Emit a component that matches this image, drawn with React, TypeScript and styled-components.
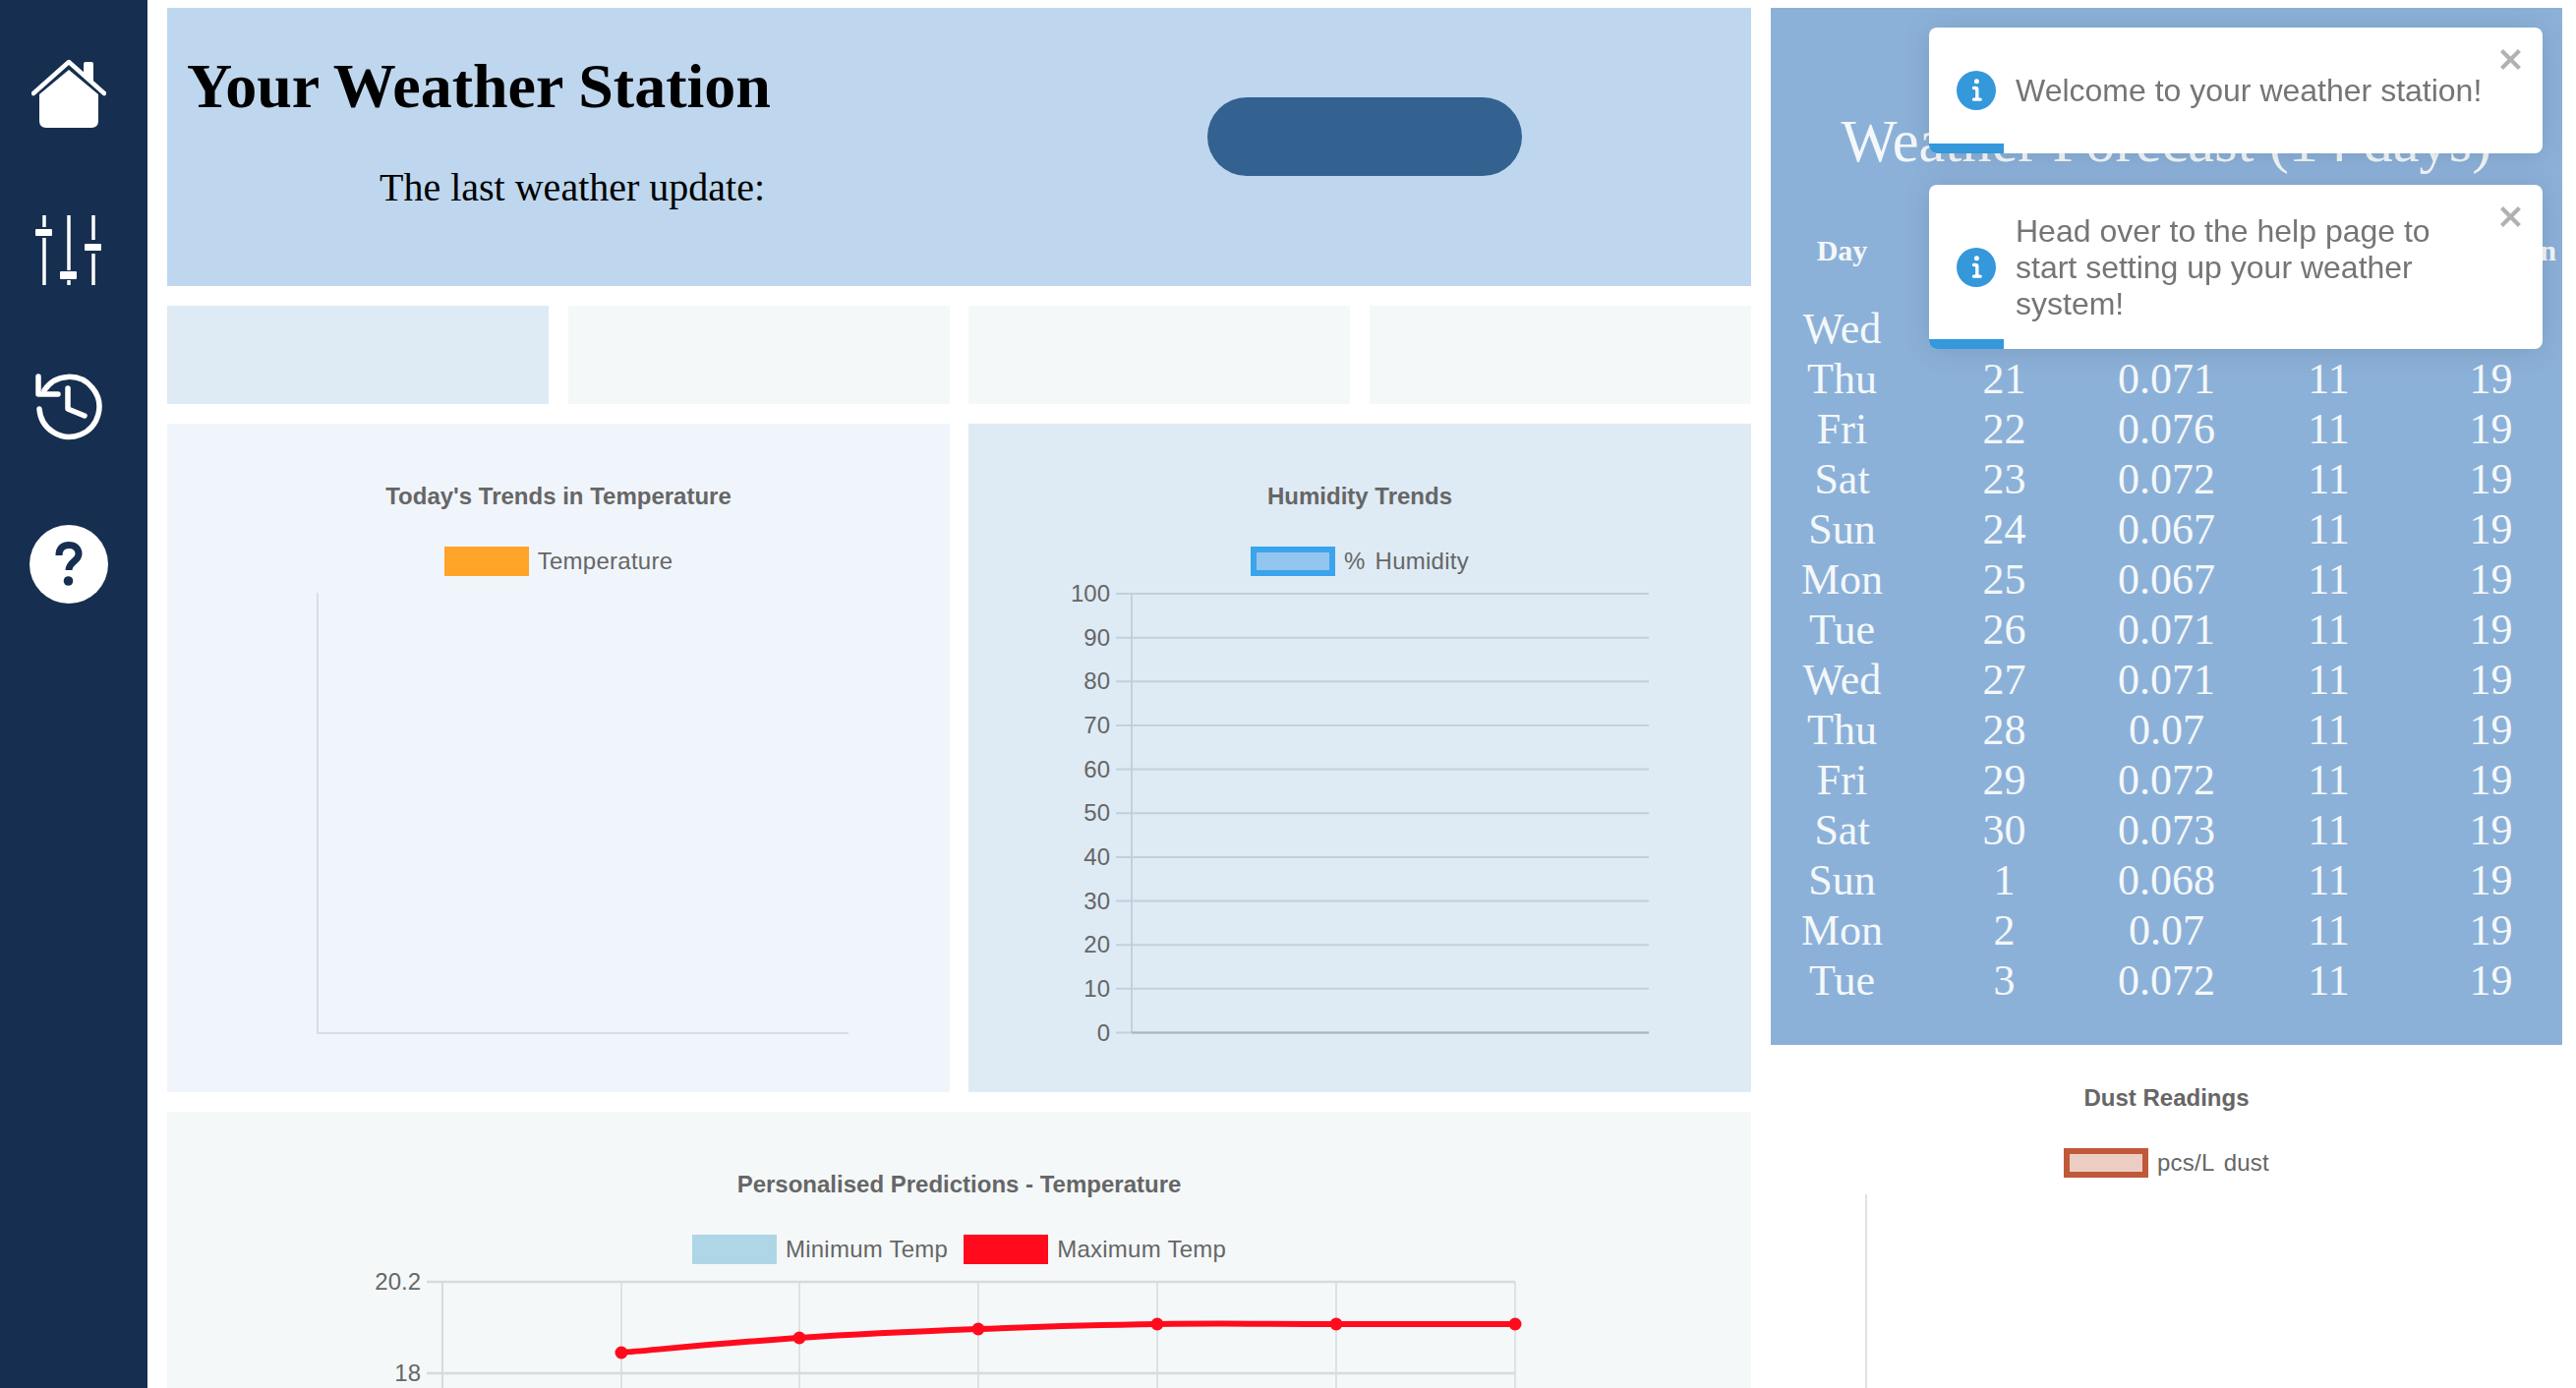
import React from 'react';
import styled, { createGlobalStyle } from 'styled-components';

const GlobalStyle = createGlobalStyle`
  html, body {
    margin: 0;
    height: 100%;
    overflow: hidden;
    background: #fff;
  }
`;

const Page = styled.div`
  display: flex;
  height: 1412px;
  overflow: hidden;
`;

const Sidebar = styled.nav`
  width: 150px;
  flex-shrink: 0;
  background: #162f50;
  display: flex;
  flex-direction: column;
  align-items: center;
  padding: 60px 10px 0 0;
  box-sizing: border-box;
`;

const NavIcon = styled.svg<{ $w: number; $h: number; $gap: number }>`
  width: ${(p) => p.$w}px;
  height: ${(p) => p.$h}px;
  margin-bottom: ${(p) => p.$gap}px;
  display: block;
  flex-shrink: 0;
`;

const Content = styled.div`
  flex: 1;
  display: grid;
  grid-template-columns: 1611px 805px;
  column-gap: 20px;
  padding: 8px 14px 0 20px;
  align-items: start;
`;

const LeftColumn = styled.main`
  display: flex;
  flex-direction: column;
  gap: 20px;
`;

const RightColumn = styled.aside`
  display: flex;
  flex-direction: column;
`;

const Header = styled.header`
  height: 283px;
  background: #bed7ee;
  display: flex;
  justify-content: space-between;
  align-items: flex-start;
  padding: 0 233px 0 20px;
  box-sizing: border-box;
  font-family: 'Liberation Serif', serif;
  color: #000;
`;

const Title = styled.h1`
  margin: 43px 0 0;
  font-size: 64px;
  line-height: 74px;
  font-weight: 700;
`;

const Subtitle = styled.p`
  margin: 43px 0 0 196px;
  font-size: 40px;
  line-height: 46px;
`;

const UpdateButton = styled.button`
  width: 320px;
  height: 80px;
  margin-top: 91px;
  border: none;
  border-radius: 40px;
  background: #336291;
`;

const StatRow = styled.section`
  display: grid;
  grid-template-columns: repeat(4, 388px);
  justify-content: space-between;
`;

const StatCard = styled.div<{ $bg: string }>`
  height: 100px;
  background: ${(p) => p.$bg};
`;

const ChartRow = styled.section`
  display: grid;
  grid-template-columns: 796px 796px;
  justify-content: space-between;
`;

const ChartCard = styled.div<{ $bg: string; $height: number; $top: number }>`
  height: ${(p) => p.$height}px;
  background: ${(p) => p.$bg};
  padding-top: ${(p) => p.$top}px;
  box-sizing: border-box;
  display: flex;
  flex-direction: column;
  align-items: center;
  font-family: 'Liberation Sans', Arial, sans-serif;
  color: #666;
  overflow: hidden;
`;

const ChartTitle = styled.div`
  font-size: 24px;
  font-weight: 700;
  line-height: 28px;
`;

const Legend = styled.div`
  display: flex;
  gap: 16px;
  margin-top: 37px;
  height: 30px;
`;

const LegendItem = styled.div<{ $wordGap?: number }>`
  display: flex;
  align-items: center;
  gap: 9px;
  font-size: 24px;
  line-height: 30px;
  letter-spacing: 0.25px;
  word-spacing: ${(p) => p.$wordGap ?? 0}px;
`;

const LegendBox = styled.span<{ $fill: string; $border: string }>`
  width: 86px;
  height: 30px;
  box-sizing: border-box;
  background: ${(p) => p.$fill};
  border: 6px solid ${(p) => p.$border};
`;

const Plot = styled.svg<{ $height: number }>`
  display: block;
  width: 100%;
  height: ${(p) => p.$height}px;
  margin-top: 2px;
  flex-shrink: 0;
  font-family: 'Liberation Sans', Arial, sans-serif;
  font-size: 24px;
  fill: #666;
`;

const ForecastPanel = styled.section`
  height: 1055px;
  background: #8cb1d9;
  color: #f4f8f9;
  font-family: 'Liberation Serif', serif;
  padding-top: 103px;
  box-sizing: border-box;
`;

const ForecastTitle = styled.h2`
  margin: 0;
  font-size: 60.5px;
  line-height: 66px;
  font-weight: 400;
  text-align: center;
`;

const ForecastGrid = styled.div`
  display: grid;
  grid-template-columns: repeat(5, 165px);
  justify-content: center;
  margin-top: 53px;
  text-align: center;
  font-size: 44px;
  line-height: 51px;
  white-space: nowrap;
`;

const HeadCell = styled.div`
  font-size: 30px;
  font-weight: 700;
  line-height: 50px;
  margin-bottom: 29px;
`;

const ToastStack = styled.div`
  position: fixed;
  top: 28px;
  left: 1962px;
  width: 624px;
  display: flex;
  flex-direction: column;
  gap: 32px;
  font-family: 'Liberation Sans', Arial, sans-serif;
`;

const Toast = styled.div<{ $height: number }>`
  position: relative;
  height: ${(p) => p.$height}px;
  background: #fff;
  border-radius: 8px;
  box-shadow: 0 2px 30px rgba(0, 0, 0, 0.12);
  display: flex;
  align-items: center;
  padding-left: 28px;
  box-sizing: border-box;
  overflow: hidden;
  color: #757575;
  font-size: 32px;
  line-height: 37px;
`;

const ToastIcon = styled.svg`
  width: 40px;
  height: 40px;
  flex-shrink: 0;
  margin-right: 20px;
  fill: #3498db;
`;

const ToastText = styled.div`
  width: 490px;
  padding-top: 1px;
`;

const CloseIcon = styled.svg`
  position: absolute;
  top: 16px;
  right: 17px;
  width: 28px;
  height: 32px;
  fill: #000;
  opacity: 0.3;
`;

const ToastProgress = styled.div`
  position: absolute;
  left: 0;
  bottom: 0;
  width: 76px;
  height: 10px;
  background: #3498db;
`;

const days: [string, number, string][] = [
  ['Wed', 20, '0.071'],
  ['Thu', 21, '0.071'],
  ['Fri', 22, '0.076'],
  ['Sat', 23, '0.072'],
  ['Sun', 24, '0.067'],
  ['Mon', 25, '0.067'],
  ['Tue', 26, '0.071'],
  ['Wed', 27, '0.071'],
  ['Thu', 28, '0.07'],
  ['Fri', 29, '0.072'],
  ['Sat', 30, '0.073'],
  ['Sun', 1, '0.068'],
  ['Mon', 2, '0.07'],
  ['Tue', 3, '0.072'],
];

const humidityTicks = [100, 90, 80, 70, 60, 50, 40, 30, 20, 10, 0];
const predictionX = [632, 813, 995, 1177, 1359, 1541];
const predictionY = [1376, 1361, 1352, 1347, 1347, 1347];

// same curve idea as chart.js line tension
const smoothPath = (xs: number[], ys: number[], tension = 0.2) => {
  let d = `M${xs[0]} ${ys[0]}`;
  for (let i = 0; i < xs.length - 1; i++) {
    const prev = Math.max(i - 1, 0);
    const next = Math.min(i + 2, xs.length - 1);
    const c1x = xs[i] + (xs[i + 1] - xs[prev]) * tension;
    const c1y = ys[i] + (ys[i + 1] - ys[prev]) * tension;
    const c2x = xs[i + 1] - (xs[next] - xs[i]) * tension;
    const c2y = ys[i + 1] - (ys[next] - ys[i]) * tension;
    d += ` C${c1x} ${c1y} ${c2x} ${c2y} ${xs[i + 1]} ${ys[i + 1]}`;
  }
  return d;
};

const INFO =
  'M12 0a12 12 0 1012 12A12.013 12.013 0 0012 0zm.25 5a1.5 1.5 0 11-1.5 1.5 1.5 1.5 0 011.5-1.5zm2.25 13.5h-4a1 1 0 010-2h.75a.25.25 0 00.25-.25v-4.5a.25.25 0 00-.25-.25h-.75a1 1 0 010-2h1a2 2 0 012 2v4.75a.25.25 0 00.25.25h.75a1 1 0 110 2z';
const CLOSE =
  'M7.71 8.23l3.75 3.75-1.48 1.48-3.75-3.75-3.75 3.75L1 11.98l3.75-3.75L1 4.48 2.48 3l3.75 3.75L9.98 3l1.48 1.48-3.75 3.75z';

const ToastBody = ({ height, children }: { height: number; children: React.ReactNode }) => (
  <Toast $height={height}>
    <ToastIcon viewBox="0 0 24 24">
      <path d={INFO} />
    </ToastIcon>
    <ToastText>{children}</ToastText>
    <CloseIcon viewBox="0 0 14 16">
      <path fillRule="evenodd" d={CLOSE} />
    </CloseIcon>
    <ToastProgress />
  </Toast>
);

const App = () => {
  return (
    <Page>
      <GlobalStyle />
      <Sidebar>
        <NavIcon $w={76} $h={70} $gap={89} viewBox="0 0 76 70">
          <path d="M38 11 L8 36 V63 Q8 70 15 70 H61 Q68 70 68 63 V36 Z" fill="#fff" />
          <path d="M2 35 L38 3 L74 35" fill="none" stroke="#fff" strokeWidth="4.5" strokeLinecap="round" strokeLinejoin="round" />
          <path d="M53 15 V5 Q53 3 55 3 H61 Q63 3 63 5 V24 Z" fill="#fff" />
        </NavIcon>
        <NavIcon $w={68} $h={71} $gap={90} viewBox="0 0 68 71">
          <g stroke="#fff" strokeWidth="3.5" fill="none">
            <path d="M9 0 V12 M9 23 V71" />
            <path d="M34 0 V56 M34 66 V71" />
            <path d="M59 0 V25 M59 39 V71" />
          </g>
          <g fill="#fff">
            <rect x="0" y="14" width="17" height="7" rx="1" />
            <rect x="25" y="57" width="17" height="8" rx="1" />
            <rect x="50" y="29" width="17" height="7" rx="1" />
          </g>
        </NavIcon>
        <NavIcon $w={68} $h={68} $gap={86} viewBox="0 0 68 68">
          <g fill="none" stroke="#fff" strokeWidth="5.5" strokeLinecap="round" strokeLinejoin="round">
            <path d="M4 36 A30.5 30.5 0 1 0 9 17" />
            <path d="M3 3 V21 H23" />
            <path d="M33 15 V36 L50 43" />
          </g>
        </NavIcon>
        <NavIcon $w={80} $h={80} $gap={0} viewBox="0 0 80 80">
          <circle cx="40" cy="40" r="40" fill="#fff" />
          <path d="M30 31 C30 23 35 20.5 40 20.5 C46 20.5 50 24 50 29.5 C50 37 40 37.5 40 46" fill="none" stroke="#162f50" strokeWidth="7" />
          <circle cx="39.5" cy="57" r="4.8" fill="#162f50" />
        </NavIcon>
      </Sidebar>

      <Content>
        <LeftColumn>
          <Header>
            <div>
              <Title>Your Weather Station</Title>
              <Subtitle>The last weather update:</Subtitle>
            </div>
            <UpdateButton />
          </Header>

          <StatRow>
            <StatCard $bg="#deebf5" />
            <StatCard $bg="#f4f8f9" />
            <StatCard $bg="#f4f8f9" />
            <StatCard $bg="#f4f8f9" />
          </StatRow>

          <ChartRow>
            <ChartCard $bg="#f0f5fc" $height={680} $top={60}>
              <ChartTitle>Today's Trends in Temperature</ChartTitle>
              <Legend>
                <LegendItem>
                  <LegendBox $fill="#ffa428" $border="#ffa428" />
                  Temperature
                </LegendItem>
              </Legend>
              <Plot $height={480} viewBox="0 0 796 480">
                <g stroke="#d8dee3" strokeWidth="2" fill="none">
                  <path d="M153 15 V463" />
                  <path d="M152 463 H693" />
                </g>
              </Plot>
            </ChartCard>

            <ChartCard $bg="#deebf5" $height={680} $top={60}>
              <ChartTitle>Humidity Trends</ChartTitle>
              <Legend>
                <LegendItem $wordGap={3}>
                  <LegendBox $fill="#92c6ef" $border="#3ba4ea" />
                  % Humidity
                </LegendItem>
              </Legend>
              <Plot $height={480} viewBox="0 0 796 480">
                <g stroke="#c2d0db" strokeWidth="2" fill="none">
                  <path d="M166 16 V462" />
                  {humidityTicks.map((t, i) => (
                    <path key={t} d={`M150 ${16 + i * 44.65} H692`} />
                  ))}
                  <path d="M166 462.5 H692" stroke="#a9b5c0" />
                </g>
                {humidityTicks.map((t, i) => (
                  <text key={t} x="144" y={16 + i * 44.65 + 8} textAnchor="end">
                    {t}
                  </text>
                ))}
              </Plot>
            </ChartCard>
          </ChartRow>

          <ChartCard $bg="#f4f8f9" $height={300} $top={60}>
            <ChartTitle>Personalised Predictions - Temperature</ChartTitle>
            <Legend>
              <LegendItem>
                <LegendBox $fill="#aed6e6" $border="#aed6e6" />
                Minimum Temp
              </LegendItem>
              <LegendItem>
                <LegendBox $fill="#ff0b1d" $border="#ff0b1d" />
                Maximum Temp
              </LegendItem>
            </Legend>
            <Plot $height={125} viewBox="170 1288 1611 125">
              <g stroke="#d5dbde" fill="none">
                <path d="M434 1304 H1541 M434 1397 H1541" strokeWidth="2.5" />
                <path d="M450 1304 V1413" strokeWidth="2" />
                {predictionX.map((x) => (
                  <path key={x} d={`M${x} 1304 V1413`} strokeWidth="1.5" />
                ))}
              </g>
              <text x="428" y="1312" textAnchor="end">20.2</text>
              <text x="428" y="1405" textAnchor="end">18</text>
              <path d={smoothPath(predictionX, predictionY)} fill="none" stroke="#ff0b1d" strokeWidth="6" />
              {predictionX.map((x, i) => (
                <circle key={x} cx={x} cy={predictionY[i]} r="6.5" fill="#ff0b1d" />
              ))}
            </Plot>
          </ChartCard>
        </LeftColumn>

        <RightColumn>
          <ForecastPanel>
            <ForecastTitle>Weather Forecast (14 days)</ForecastTitle>
            <ForecastGrid>
              <HeadCell>Day</HeadCell>
              <HeadCell>Date</HeadCell>
              <HeadCell>Rain</HeadCell>
              <HeadCell>Temp Max</HeadCell>
              <HeadCell>Temp Min</HeadCell>
              {days.map(([day, date, rain], i) => (
                <React.Fragment key={i}>
                  <div>{day}</div>
                  <div>{date}</div>
                  <div>{rain}</div>
                  <div>11</div>
                  <div>19</div>
                </React.Fragment>
              ))}
            </ForecastGrid>
          </ForecastPanel>

          <ChartCard $bg="#fff" $height={349} $top={40}>
            <ChartTitle>Dust Readings</ChartTitle>
            <Legend>
              <LegendItem $wordGap={3}>
                <LegendBox $fill="#eccdc4" $border="#c0583a" />
                pcs/L dust
              </LegendItem>
            </Legend>
            <Plot $height={212} viewBox="0 0 805 212">
              <path d="M97 15 V212" stroke="#e2e2e2" strokeWidth="2" fill="none" />
            </Plot>
          </ChartCard>
        </RightColumn>
      </Content>

      <ToastStack>
        <ToastBody height={128}>Welcome to your weather station!</ToastBody>
        <ToastBody height={167}>Head over to the help page to start setting up your weather system!</ToastBody>
      </ToastStack>
    </Page>
  );
};

export default App;
